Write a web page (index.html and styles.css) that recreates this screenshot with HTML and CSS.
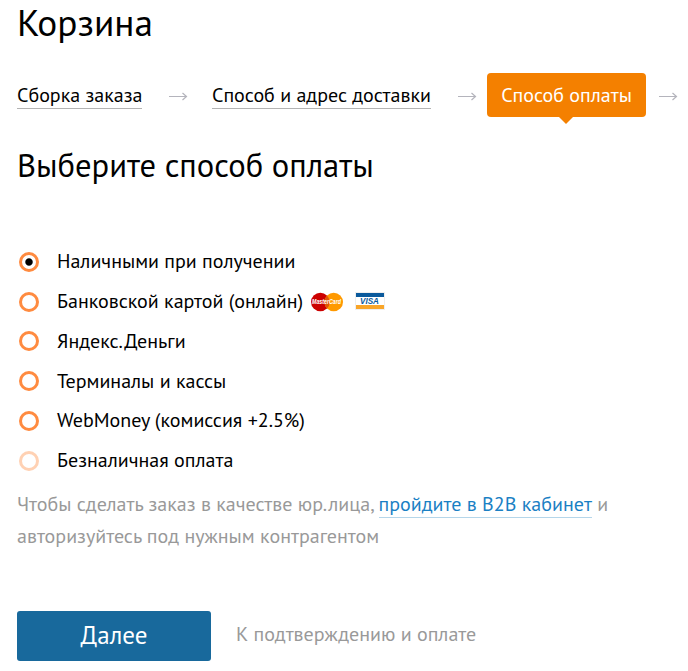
FILE: index.html
```html
<!DOCTYPE html>
<html lang="ru">
<head>
    <meta charset="UTF-8">
    <meta name="viewport" content="width=device-width, initial-scale=1.0">
    <title>Корзина</title>
    <link rel="stylesheet" href="styles.css">
</head>
<body>
    <h1>Корзина</h1>

    <nav class="steps">
        <a class="step" href="#">Сборка заказа</a>
        <svg class="arrow" width="20" height="9" viewBox="0 0 20 9"><path d="M1 4.5H18.5M14.5 1L18.5 4.5L14.5 8"/></svg>
        <a class="step step-delivery" href="#">Способ и адрес доставки</a>
        <svg class="arrow" width="20" height="9" viewBox="0 0 20 9"><path d="M1 4.5H18.5M14.5 1L18.5 4.5L14.5 8"/></svg>
        <span class="step-active">Способ оплаты</span>
        <svg class="arrow arrow-last" width="20" height="9" viewBox="0 0 20 9"><path d="M1 4.5H18.5M14.5 1L18.5 4.5L14.5 8"/></svg>
    </nav>

    <h2>Выберите способ оплаты</h2>

    <form>
        <div class="options">
            <label class="option">
                <input type="radio" name="payment" checked>
                <span>Наличными при получении</span>
            </label>
            <label class="option">
                <input type="radio" name="payment">
                <span>Банковской картой (онлайн)</span>
                <svg class="mastercard" width="34" height="20" viewBox="0 0 34 20">
                    <circle cx="10.3" cy="10" r="9.3" fill="#c00"/>
                    <circle cx="23.7" cy="10" r="9.3" fill="#f90"/>
                    <path d="M17 3.5a9.3 9.3 0 0 1 0 13a9.3 9.3 0 0 1 0-13z" fill="#e0560a"/>
                    <text x="2" y="12.4" textLength="29" lengthAdjust="spacingAndGlyphs">MasterCard</text>
                </svg>
                <svg class="visa" width="30" height="18" viewBox="0 0 30 18">
                    <rect x="0.5" y="0.5" width="29" height="17" fill="#fff" stroke="#eee"/>
                    <rect x="1" y="1" width="28" height="4" fill="#0a5a9c"/>
                    <rect x="1" y="13" width="28" height="4" fill="#f9a528"/>
                    <text x="5" y="12.3" textLength="19" lengthAdjust="spacingAndGlyphs">VISA</text>
                </svg>
            </label>
            <label class="option">
                <input type="radio" name="payment">
                <span>Яндекс.Деньги</span>
            </label>
            <label class="option">
                <input type="radio" name="payment">
                <span>Терминалы и кассы</span>
            </label>
            <label class="option">
                <input type="radio" name="payment">
                <span>WebMoney (комиссия +2.5%)</span>
            </label>
            <label class="option">
                <input type="radio" name="payment" disabled>
                <span>Безналичная оплата</span>
            </label>
        </div>

        <p class="hint">Чтобы сделать заказ в качестве юр.лица, <a href="#">пройдите в B2B кабинет</a> и<br>авторизуйтесь под нужным контрагентом</p>

        <div class="actions">
            <button class="next" type="submit">Далее</button>
            <span class="next-note">К подтверждению и оплате</span>
        </div>
    </form>
</body>
</html>
```
FILE: styles.css
```css
* {
    box-sizing: border-box;
}

body {
    margin: 0;
    padding-left: 17px;
    overflow: hidden;
    background: #fff;
    color: #000;
    font-family: "PT Sans", "Noto Sans", sans-serif;
    font-size: 20px;
    white-space: nowrap;
}

h1 {
    margin: 0;
    height: 73px;
    font-size: 37.3px;
    font-weight: 400;
    line-height: 45px;
}

h2 {
    margin: 27px 0 0;
    font-size: 32.6px;
    font-weight: 400;
    line-height: 42px;
}

.steps {
    display: flex;
    align-items: center;
    height: 44px;
}

.step {
    flex: none;
    width: 125px;
    margin-top: 1px;
    border-bottom: 1px solid #b3b3b3;
    color: #000;
    line-height: 26px;
    text-decoration: none;
}

.step-delivery {
    width: 219px;
}

.arrow {
    flex: none;
    margin: 2px 24px 0 26px;
    fill: none;
    stroke: #b4b4bc;
    stroke-width: 1.2;
}

.step-delivery + .arrow {
    margin-right: 10px;
}

.arrow-last {
    margin-left: 12px;
}

.step-active {
    position: relative;
    flex: none;
    width: 159px;
    border-radius: 4px;
    background: #f48000;
    color: #fff;
    line-height: 44px;
    text-align: center;
}

.step-active::after {
    content: "";
    position: absolute;
    top: 100%;
    left: 72px;
    border: 7px solid transparent;
    border-top-color: #f48000;
    border-bottom: 0;
}

.options {
    margin-top: 56px;
}

.option {
    display: flex;
    align-items: center;
    height: 39.8px;
}

.option span {
    margin-bottom: 1.3px;
}

.option input {
    appearance: none;
    flex: none;
    width: 20px;
    height: 20px;
    margin: 0 18px 0 2px;
    border: 3px solid #ff8b40;
    border-radius: 50%;
}

.option input:checked {
    background: radial-gradient(circle, #000 3.2px, transparent 4.2px);
}

.option input:disabled {
    opacity: 0.4;
}

.mastercard {
    margin: 1px 0 0 7px;
}

.visa {
    margin: 0 0 2px 11px;
}

.mastercard text,
.visa text {
    font: italic bold 6.5px "Liberation Sans", sans-serif;
    fill: #fff;
}

.visa text {
    font-size: 9.5px;
    fill: #0a5a9c;
}

.hint {
    margin: 7px 0 0;
    color: #999;
    letter-spacing: 0.02px;
    line-height: 32px;
}

.hint a {
    display: inline-block;
    border-bottom: 1px solid #b5d6ea;
    color: #1a80c4;
    line-height: 26px;
    text-decoration: none;
}

.actions {
    display: flex;
    align-items: center;
    margin-top: 59px;
}

.next {
    width: 194px;
    height: 50px;
    margin: 0 25px 0 0;
    padding: 0 0 2px;
    border: 0;
    border-radius: 3px;
    background: #18699c;
    color: #fff;
    font: inherit;
    font-size: 25px;
}

.next-note {
    margin-bottom: 3px;
    color: #999;
}
```
